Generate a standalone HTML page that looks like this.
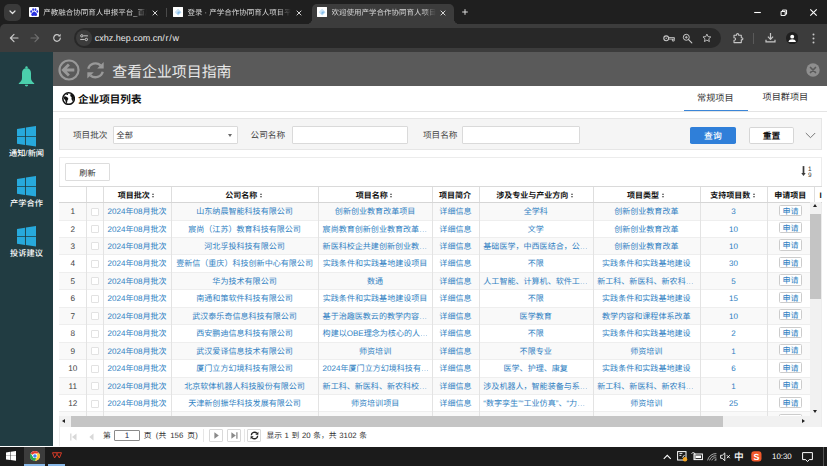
<!DOCTYPE html>
<html lang="zh-CN"><head><meta charset="utf-8"><title>产学合作协同育人项目平台</title>
<style>
*{box-sizing:border-box;margin:0;padding:0}
html,body{width:827px;height:466px;overflow:hidden;background:#fff}
body{position:relative;text-rendering:geometricPrecision;font-family:"Liberation Sans","Noto Sans CJK SC",sans-serif;font-size:8px;color:#333;line-height:1}
.abs{position:absolute}
/* ---------- browser chrome ---------- */
#tabstrip{position:absolute;left:0;top:0;width:827px;height:32px;background:#1f1f1f}
#toolbar{position:absolute;left:0;top:24px;width:827px;height:28px;background:#3c3c3c;border-top-left-radius:5px}
#tabsearch{position:absolute;left:4px;top:4px;width:16.5px;height:16.5px;border-radius:5px;background:#3a3a3a}
.tab{position:absolute;top:4px;height:20px;color:#d6d6d6;font-size:7.5px;white-space:nowrap}
.tab .fav{position:absolute;top:3px;width:10.4px;height:10.4px;background:#fff;border-radius:1px;overflow:hidden}
.tab .tt{position:absolute;top:0;height:18px;line-height:18.4px;overflow:hidden;-webkit-mask-image:linear-gradient(90deg,#000 88%,transparent 100%);mask-image:linear-gradient(90deg,#000 88%,transparent 100%)}
.tab .x{position:absolute;top:4.5px;width:8px;height:8px}
#tab3{left:312px;width:141.5px;background:#3c3c3c;border-radius:5px 5px 0 0}
#tab3:before,#tab3:after{content:"";position:absolute;bottom:0;width:5px;height:5px;background:radial-gradient(circle at 0 0,transparent 4.8px,#3c3c3c 5.2px)}
#tab3:before{left:-5px}
#tab3:after{right:-5px;background:radial-gradient(circle at 100% 0,transparent 4.8px,#3c3c3c 5.2px)}
#omni{position:absolute;left:73.5px;top:3.8px;width:647.5px;height:20.6px;border-radius:10.3px;background:#282828}
#siteinfo{position:absolute;left:2.4px;top:2.4px;width:15.8px;height:15.8px;border-radius:50%;background:#3c3c3c}
#url{position:absolute;left:21.3px;top:0;height:20.6px;line-height:20.2px;font-size:9px;color:#e8e8e8;letter-spacing:0}
/* ---------- app ---------- */
#side{position:absolute;left:0;top:52px;width:53px;height:394px;background:#213c42}
.nav{position:absolute;left:0;width:53px;text-align:center;color:#fff;font-size:8.2px;font-weight:500;white-space:nowrap}
#hdr{position:absolute;left:53px;top:52px;width:774px;height:33.5px;background:#5a5a5a}
#hdr .t{position:absolute;left:59.3px;top:0;height:33.5px;line-height:42px;font-size:14.9px;color:#e8e8e8;white-space:nowrap}
#ptitle{position:absolute;left:78px;top:85.5px;height:25.5px;line-height:29px;font-size:10.6px;font-weight:bold;color:#111;white-space:nowrap}
#pline{position:absolute;left:53px;top:111px;width:774px;height:1px;background:#e4e4e4}
.ptab{position:absolute;top:88px;height:20px;line-height:20px;font-size:9.15px;color:#333;white-space:nowrap}
#tabul{position:absolute;left:684px;top:110.1px;width:64px;height:1.3px;background:#3b86d8}
#filter{position:absolute;left:59px;top:118.3px;width:763px;height:31.6px;background:#f5f5f5;border:1px solid #e6e6e6}
.lbl{position:absolute;top:126.4px;height:17.2px;line-height:19.2px;font-size:8.65px;color:#444;white-space:nowrap}
.inp{position:absolute;top:126.3px;height:17.8px;background:#fff;border:1px solid #dadada;border-radius:1px}
.inp span{position:absolute;left:2.2px;top:0;line-height:17.2px;font-size:8.1px;color:#333}
.inp i{position:absolute;right:4.6px;top:6.5px;border:2.6px solid transparent;border-top:3.9px solid #6a6a6a;border-bottom:0}
.btn{position:absolute;top:127.2px;height:16.6px;line-height:19.2px;text-align:center;font-size:8.8px;border-radius:1.8px}
#bq{left:690.2px;width:45.4px;background:#2f7fd9;color:#fff;font-weight:500}
#br{left:749.3px;width:44.4px;background:#fff;border:1px solid #d6d6d6;color:#111;line-height:17.2px;font-weight:bold}
#gridp{position:absolute;left:59px;top:157.4px;width:763px;height:288.6px;border:1px solid #ececec;border-bottom:0;background:#fff}
#bref{position:absolute;left:65.2px;top:163.4px;width:44.6px;height:17.4px;line-height:19.8px;border:1px solid #ddd;border-radius:1px;background:#fff;text-align:center;font-size:8.2px;color:#333}
.ghead{position:absolute;left:59px;top:186px;width:763px;height:17.1px;border-top:1px solid #dadada;border-bottom:1px solid #d6d6d6;background:#fff;overflow:hidden}
.hc{position:absolute;top:0;height:16.1px;line-height:18px;padding-right:2.2px;text-align:center;font-weight:bold;color:#111;font-size:8px;border-left:1px solid #dedede;white-space:nowrap;overflow:hidden}
.hc:first-child{border-left:0}
.hc.last{text-align:left;padding-left:4px}
.srt{display:inline-block;position:relative;width:3.5px;height:5px;margin-left:2.6px;vertical-align:0.4px}
.srt:before,.srt:after{content:"";position:absolute;left:0;border:1.75px solid transparent}
.srt:before{top:0;border-bottom:2.1px solid #555;border-top:0}
.srt:after{top:2.9px;border-top:2.1px solid #555;border-bottom:0}
.gbody{position:absolute;left:59px;top:203.1px;width:751.4px;height:213.1px;overflow:hidden;background:#fff}
.gr{position:absolute;left:0;width:763px;height:17.45px;border-bottom:1px solid #eee;background:#fff}
.gr.alt{background:#f9f9f9}
.c{position:absolute;top:0;height:17.45px;line-height:18.4px;padding-right:1.5px;text-align:center;color:#2f7fc2;font-size:8.05px;border-left:1px solid #e3e3e3;white-space:nowrap;overflow:hidden}
.c:first-child{border-left:0}
.c.num{padding-right:0;color:#444;font-size:8.2px}
.cb{display:inline-block;width:8px;height:8px;border:1px solid #e2e2e2;background:#fff;vertical-align:-1.5px;border-radius:1px}
.btn-a{display:inline-block;width:23.4px;height:11.2px;line-height:11.2px;border:1px solid #ccc;border-radius:1.5px;background:#fff;color:#2f7fc2;font-size:8.05px;vertical-align:0.5px}
#vsb{position:absolute;left:810.2px;top:202.4px;width:10.8px;height:213.8px;background:#f1f1f1}
#vsb b{position:absolute;left:0;top:11.4px;width:10.8px;height:85.4px;background:#c4c4c4}
#hsb{position:absolute;left:59.5px;top:416.2px;width:761.5px;height:11.2px;background:#f1f1f1}
#hsb b{position:absolute;left:11.8px;top:0;width:651.8px;height:11.2px;background:#c5c5c5}
.tri{position:absolute;width:0;height:0;border:2.6px solid transparent}
#pager{position:absolute;left:59.5px;top:427.4px;width:762px;height:18.6px;background:#fff;font-size:7.8px;color:#333}
#pager span,#pager div{position:absolute;white-space:nowrap}
.pg{top:0;height:18.6px;line-height:17.6px}
.pb{top:1.2px;height:13.8px;border:1px solid #d9d9d9;background:#fff;border-radius:1px}
#taskbar{position:absolute;left:0;top:446.7px;width:827px;height:19.3px;background:#1b1b1b;overflow:hidden}
#taskbar .clk{position:absolute;left:772px;top:0;height:20px;line-height:20.6px;font-size:7.9px;color:#fff}
.c.tr{text-align:left;padding-left:3.3px}
.e{opacity:.6}
</style></head>
<body>
<!-- ===== browser tab strip ===== -->
<div id="tabstrip">
  <div id="tabsearch"><svg class="abs" style="left:5px;top:6px" width="7" height="5" viewBox="0 0 7 5"><path d="M1 1 L3.5 3.5 L6 1" fill="none" stroke="#e3e3e3" stroke-width="1.2" stroke-linecap="round" stroke-linejoin="round"/></svg></div>
  <div class="tab" id="tab1" style="left:24px;width:142px">
    <div class="fav" style="left:4.7px"><svg width="10.4" height="10.4" viewBox="0 0 20 20"><g fill="#2932e1"><ellipse cx="4.2" cy="8.6" rx="1.8" ry="2.4"/><ellipse cx="8" cy="5" rx="1.8" ry="2.5"/><ellipse cx="12.4" cy="5" rx="1.8" ry="2.5"/><ellipse cx="16" cy="8.8" rx="1.8" ry="2.4"/><path d="M10 8.6c2.4 0 3 2.2 4.6 3.6 1.8 1.6 1.4 4.6-1 5-1.400.2-2.400-.4-3.600-.4s-2.200.6-3.600.4c-2.400-.4-2.800-3.400-1-5C7 10.800 7.600 8.600 10 8.600z"/></g></svg></div>
    <div class="tt" style="left:19.3px;width:104px">产教融合协同育人申报平台_百度搜索</div>
    <svg class="x" style="left:126.8px" viewBox="0 0 8 8"><path d="M1.700 1.700L6.300 6.300M6.300 1.700L1.700 6.300" stroke="#dcdcdc" stroke-width=".950"/></svg>
  </div>
  <div class="abs" style="left:166.300px;top:8px;width:1px;height:9px;background:#4a4a4a"></div>
  <div class="tab" id="tab2" style="left:168px;width:142px">
    <div class="fav" style="left:5px"><svg width="10.400" height="10.400" viewBox="0 0 20 20"><rect width="20" height="20" fill="#fff"/><path d="M10 3.500l6.500 6.500-6.500 6.500L3.500 10z" fill="#b9daf3"/><path d="M10 6.500l3.500 3.500-3.500 3.500L6.500 10z" fill="#7db9ea"/><path d="M10 3.500l3 3-6.500 6.500-3-3z" fill="#d5e9f8" opacity=".8"/></svg></div>
    <div class="tt" style="left:19.500px;width:103px">登录 · 产学合作协同育人项目平台</div>
    <svg class="x" style="left:127.200px" viewBox="0 0 8 8"><path d="M1.700 1.700L6.300 6.300M6.300 1.700L1.700 6.300" stroke="#dcdcdc" stroke-width=".950"/></svg>
  </div>
  <div class="tab" id="tab3">
    <div class="fav" style="left:5px"><svg width="10.400" height="10.400" viewBox="0 0 20 20"><rect width="20" height="20" fill="#fff"/><path d="M10 3.500l6.500 6.500-6.500 6.500L3.500 10z" fill="#b9daf3"/><path d="M10 6.500l3.500 3.500-3.500 3.500L6.500 10z" fill="#7db9ea"/><path d="M10 3.500l3 3-6.500 6.500-3-3z" fill="#d5e9f8" opacity=".8"/></svg></div>
    <div class="tt" style="left:19.600px;width:104px">欢迎使用产学合作协同育人项目平台</div>
    <svg class="x" style="left:127px" viewBox="0 0 8 8"><path d="M1.700 1.700L6.300 6.300M6.300 1.700L1.700 6.300" stroke="#dcdcdc" stroke-width=".950"/></svg>
  </div>
  <svg class="abs" style="left:460.800px;top:8.400px" width="8" height="8" viewBox="0 0 8 8"><path d="M4 1.200v5.600M1.200 4h5.600" stroke="#dcdcdc" stroke-width="1"/></svg>
  <!-- window controls -->
  <svg class="abs" style="left:753px;top:8px" width="9" height="9" viewBox="0 0 9 9"><path d="M1.200 4.500h6.600" stroke="#fff" stroke-width="1.100"/></svg>
  <svg class="abs" style="left:780.400px;top:8.600px" width="7.400" height="7.400" viewBox="0 0 9 9"><path d="M1.300 3h5v5h-5z" fill="none" stroke="#fff" stroke-width="1.200"/><path d="M3 3V1.300h5v5H6.300" fill="none" stroke="#fff" stroke-width="1.200"/></svg>
  <svg class="abs" style="left:808.600px;top:7.900px" width="9" height="9" viewBox="0 0 9 9"><path d="M1.300 1.300l6.400 6.400M7.700 1.300L1.300 7.700" stroke="#fff" stroke-width="1.100"/></svg>
</div>
<!-- ===== browser toolbar ===== -->
<div id="toolbar">
  <svg class="abs" style="left:8.500px;top:9.200px" width="10" height="10" viewBox="0 0 10 10"><path d="M9 5H1.600M5 1.400L1.400 5 5 8.600" fill="none" stroke="#c7c7c7" stroke-width="1.200" stroke-linecap="round" stroke-linejoin="round"/></svg>
  <svg class="abs" style="left:29.800px;top:9.200px" width="10" height="10" viewBox="0 0 10 10"><path d="M1 5h7.400M5 1.400L8.600 5 5 8.600" fill="none" stroke="#6e6e6e" stroke-width="1.200" stroke-linecap="round" stroke-linejoin="round"/></svg>
  <svg class="abs" style="left:51.900px;top:9.200px" width="10" height="10" viewBox="0 0 10 10"><path d="M8.300 5A3.300 3.300 0 1 1 7.300 2.600" fill="none" stroke="#c7c7c7" stroke-width="1.200" stroke-linecap="round"/><path d="M8.600 0.800v2.600H6z" fill="#c7c7c7"/></svg>
  <div id="omni">
    <div id="siteinfo"><svg class="abs" style="left:3.800px;top:4.300px" width="8.200" height="7.300" viewBox="0 0 9 8"><circle cx="2" cy="2" r="1.300" fill="none" stroke="#e3e3e3" stroke-width=".9"/><path d="M4.300 2h4" stroke="#e3e3e3" stroke-width=".9" stroke-linecap="round"/><circle cx="7" cy="6" r="1.300" fill="none" stroke="#e3e3e3" stroke-width=".9"/><path d="M.700 6h4" stroke="#e3e3e3" stroke-width=".9" stroke-linecap="round"/></svg></div>
    <div id="url">cxhz.hep.com.cn<span style="letter-spacing:.700px">/r/w</span></div>
    <!-- key -->
    <svg class="abs" style="left:589px;top:6px" width="13" height="9" viewBox="0 0 13 9"><circle cx="3.200" cy="4.300" r="2.400" fill="none" stroke="#c7c7c7" stroke-width="1.100"/><circle cx="3.200" cy="4.300" r=".700" fill="#c7c7c7"/><path d="M5.600 3.600h5.800v1.500H5.600" fill="none" stroke="#c7c7c7" stroke-width=".9"/><path d="M9.400 5v2h1.800V5" fill="none" stroke="#c7c7c7" stroke-width=".9"/></svg>
    <!-- zoom -->
    <svg class="abs" style="left:608.500px;top:5px" width="11" height="11" viewBox="0 0 11 11"><circle cx="4.300" cy="4.300" r="3" fill="none" stroke="#c7c7c7" stroke-width="1"/><path d="M6.600 6.600l3.200 3.200" stroke="#c7c7c7" stroke-width="1.200" stroke-linecap="round"/><path d="M2.900 4.300h2.800M4.300 2.900v2.800" stroke="#c7c7c7" stroke-width=".9"/></svg>
    <!-- star -->
    <svg class="abs" style="left:628.700px;top:5.400px" width="9.800" height="9.800" viewBox="0 0 11 11"><path d="M5.500 1.200l1.300 2.900 3.100.3-2.300 2.100.7 3.100-2.800-1.600-2.800 1.600.7-3.100L1.100 4.400l3.100-.3z" fill="none" stroke="#c7c7c7" stroke-width="1" stroke-linejoin="round"/></svg>
  </div>
  <!-- extension -->
  <svg class="abs" style="left:731.500px;top:8px" width="12" height="12" viewBox="0 0 12 12"><path d="M2 3.300h2.500v-.600a1.100 1.100 0 0 1 2.200 0v.600H9.300v2.400h.500a1.100 1.100 0 0 1 0 2.200h-.500V10.600H2V8.200h.400a1.200 1.200 0 0 0 0-2.400H2z" fill="none" stroke="#c7c7c7" stroke-width="1.100" stroke-linejoin="round"/></svg>
  <div class="abs" style="left:753.400px;top:8.500px;width:1px;height:11px;background:#5a5a5a"></div>
  <!-- download -->
  <svg class="abs" style="left:764.500px;top:8.400px" width="11" height="11" viewBox="0 0 11 11"><path d="M5.500 1v6M2.900 4.700l2.600 2.600 2.600-2.600" fill="none" stroke="#c7c7c7" stroke-width="1.200" stroke-linejoin="round"/><path d="M1 7.800v2.100h9V7.800" fill="none" stroke="#c7c7c7" stroke-width="1.200"/></svg>
  <!-- profile -->
  <svg class="abs" style="left:785.600px;top:7.800px" width="12.400" height="12.400" viewBox="0 0 12 12"><circle cx="6" cy="6" r="6" fill="#1f1f1f"/><circle cx="6" cy="4.500" r="1.900" fill="#fff"/><path d="M2.400 9.600c.5-1.900 2-2.500 3.600-2.500s3.100.6 3.600 2.500z" fill="#fff"/></svg>
  <svg class="abs" style="left:812px;top:8.500px" width="3" height="11" viewBox="0 0 3 11"><circle cx="1.500" cy="1.500" r="1" fill="#c7c7c7"/><circle cx="1.500" cy="5.500" r="1" fill="#c7c7c7"/><circle cx="1.500" cy="9.500" r="1" fill="#c7c7c7"/></svg>
</div>
<!-- ===== sidebar ===== -->
<div id="side">
  <svg class="abs" style="left:18px;top:14px" width="17" height="21" viewBox="0 0 17 21"><circle cx="8.500" cy="1.400" r="1.200" fill="#4bcfac"/><path d="M8.500 2.300C11.200 2.300 13 4 13 7V12C13 14.500 14.500 16 16.200 17.200V18H.800V17.200C2.500 16 4 14.500 4 12V7C4 4 5.800 2.300 8.500 2.300Z" fill="#4bcfac"/><path d="M6.900 18.700h3.200c0 1.100-.7 1.700-1.600 1.700s-1.600-.6-1.600-1.700z" fill="#4bcfac"/></svg>
  <svg class="abs winlogo" style="left:16.600px;top:74.0px" width="19.500" height="20.700" viewBox="0 0 22 23" preserveAspectRatio="none"><path d="M0 3.200l9-1.300v9.100H0zM10 1.800L22 0v11H10zM0 12h9v9.100l-9-1.300zM10 12h12v11l-12-1.800z" fill="#27a9dc"/></svg>
  <div class="nav" style="top:98.300px">通知/新闻</div>
  <svg class="abs winlogo" style="left:16.600px;top:123.9px" width="19.500" height="20.700" viewBox="0 0 22 23" preserveAspectRatio="none"><path d="M0 3.200l9-1.300v9.100H0zM10 1.800L22 0v11H10zM0 12h9v9.100l-9-1.300zM10 12h12v11l-12-1.800z" fill="#27a9dc"/></svg>
  <div class="nav" style="top:148.200px">产学合作</div>
  <svg class="abs winlogo" style="left:16.600px;top:173.9px" width="19.500" height="20.700" viewBox="0 0 22 23" preserveAspectRatio="none"><path d="M0 3.200l9-1.300v9.100H0zM10 1.800L22 0v11H10zM0 12h9v9.100l-9-1.300zM10 12h12v11l-12-1.800z" fill="#27a9dc"/></svg>
  <div class="nav" style="top:198.200px">投诉建议</div>
</div>
<!-- ===== app header ===== -->
<div id="hdr">
  <svg class="abs" style="left:5.100px;top:6.800px" width="22" height="22" viewBox="0 0 22 22"><circle cx="11" cy="11" r="9.500" fill="none" stroke="#999" stroke-width="2.200"/><path d="M16.300 11H5.800M10.900 5.400L5.300 11l5.600 5.600" fill="none" stroke="#999" stroke-width="2.800" stroke-linecap="butt" stroke-linejoin="miter"/></svg>
  <svg class="abs" style="left:33.400px;top:8.600px" width="19" height="18.600" viewBox="0 0 20 20" preserveAspectRatio="none"><path d="M2.400 8.400A7.800 7.400 0 0 1 15.400 4.600" fill="none" stroke="#999" stroke-width="2.500"/><path d="M18.600 1.200v6.800h-6.800z" fill="#999"/><path d="M17.600 11.600A7.800 7.400 0 0 1 4.600 15.400" fill="none" stroke="#999" stroke-width="2.500"/><path d="M1.400 18.800v-6.800h6.800z" fill="#999"/></svg>
  <div class="t">查看企业项目指南</div>
  <svg class="abs" style="left:753.400px;top:10.500px" width="14" height="14" viewBox="0 0 14 14"><circle cx="7" cy="7" r="6.700" fill="#8e8e8e"/><path d="M4.500 4.500l5 5M9.500 4.500l-5 5" stroke="#5a5a5a" stroke-width="1.700" stroke-linecap="round"/></svg>
</div>
<!-- ===== panel title & tabs ===== -->
<svg class="abs" style="left:61.800px;top:91.800px" width="13.200" height="13.200" viewBox="0 0 13 13"><circle cx="6.500" cy="6.500" r="5.700" fill="#fff" stroke="#111" stroke-width="1.500"/><path d="M2.300 4.400c.8-.3 1.700-.1 2.400.5.700.5 1.500.8 1.500 1.700 0 .8-.7 1.200-.9 2-.2.900-.1 2-.9 2.500-.7-.5-.8-1.500-1-2.400-.3-1-1.300-1.500-1.600-2.500-.2-.7 0-1.400.5-1.800z" fill="#111"/><path d="M8.300 1.800c.3.700-.2 1.300-.1 2 .1.600.8.700 1.100 1.200.4.700-.1 1.500.1 2.200.2.700.9 1.100 1 1.900 1.300-1.200 1.700-3 1.200-4.600-.5-1.400-1.700-2.400-3.300-2.700z" fill="#111"/><path d="M5.200 1.300c.6.200 1 .7.700 1.300-.3.500-1 .3-1.500 0-.3-.3-.2-.8.100-1.100.2-.1.500-.2.700-.2z" fill="#111"/></svg>
<div id="ptitle">企业项目列表</div>
<div class="ptab" style="left:697px">常规项目</div>
<div class="ptab" style="left:762.600px;top:87.200px">项目群项目</div>
<div id="pline"></div>
<div id="tabul"></div>
<!-- ===== filter ===== -->
<div id="filter"></div>
<div class="lbl" style="left:72.900px">项目批次</div>
<div class="inp" style="left:113.400px;width:124.400px"><span>全部</span><i></i></div>
<div class="lbl" style="left:250.500px">公司名称</div>
<div class="inp" style="left:291.700px;width:116.500px"></div>
<div class="lbl" style="left:422.900px">项目名称</div>
<div class="inp" style="left:462.200px;width:117.800px"></div>
<div class="btn" id="bq">查询</div>
<div class="btn" id="br">重置</div>
<svg class="abs" style="left:804.500px;top:131.800px" width="11" height="7" viewBox="0 0 11 7"><path d="M.800 1l4.700 4.700L10.200 1" fill="none" stroke="#777" stroke-width="1"/></svg>
<!-- ===== grid panel ===== -->
<div id="gridp"></div>
<div id="bref">刷新</div>
<svg class="abs" style="left:799.500px;top:166px" width="14" height="12" viewBox="0 0 14 12"><path d="M3.500 .100v8" stroke="#3a3a3a" stroke-width="1.700"/><path d="M1.300 7h4.400L3.500 10.100z" fill="#3a3a3a"/><text x="9.700" y="4.600" text-anchor="middle" style="font-family:'Liberation Sans',sans-serif;font-size:6.400px" fill="#333">1</text><text x="9.700" y="10.800" text-anchor="middle" style="font-family:'Liberation Sans',sans-serif;font-size:6.400px" fill="#333">9</text></svg>
<div class="ghead">
<div class="hc" style="left:0.0px;width:27.4px"></div>
<div class="hc" style="left:27.4px;width:16.9px"></div>
<div class="hc" style="left:44.3px;width:68.0px">项目批次<i class="srt"></i></div>
<div class="hc" style="left:112.3px;width:147.0px">公司名称<i class="srt"></i></div>
<div class="hc" style="left:259.3px;width:114.1px">项目名称<i class="srt"></i></div>
<div class="hc" style="left:373.4px;width:46.6px">项目简介</div>
<div class="hc" style="left:420.0px;width:113.9px">涉及专业与产业方向<i class="srt"></i></div>
<div class="hc" style="left:533.9px;width:107.4px">项目类型<i class="srt"></i></div>
<div class="hc" style="left:641.3px;width:67.0px">支持项目数<i class="srt"></i></div>
<div class="hc" style="left:708.3px;width:47.1px">申请项目</div>
<div class="hc last" style="left:755.4px;width:7.6px">I</div>
</div>
<div class="gbody">
<div class="gr alt" style="top:0.00px">
<div class="c num" style="left:0.0px;width:27.4px">1</div><div class="c" style="left:27.4px;width:16.9px"><span class="cb"></span></div><div class="c" style="left:44.3px;width:68.0px">2024年08月批次</div><div class="c" style="left:112.3px;width:147.0px">山东纳晨智能科技有限公司</div><div class="c" style="left:259.3px;width:114.1px">创新创业教育改革项目</div><div class="c" style="left:373.4px;width:46.6px">详细信息</div><div class="c" style="left:420.0px;width:113.9px">全学科</div><div class="c" style="left:533.9px;width:107.4px">创新创业教育改革</div><div class="c" style="left:641.3px;width:67.0px">3</div><div class="c" style="left:708.3px;width:47.1px"><span class="btn-a">申请</span></div>
</div>
<div class="gr" style="top:17.45px">
<div class="c num" style="left:0.0px;width:27.4px">2</div><div class="c" style="left:27.4px;width:16.9px"><span class="cb"></span></div><div class="c" style="left:44.3px;width:68.0px">2024年08月批次</div><div class="c" style="left:112.3px;width:147.0px">宸尚（江苏）教育科技有限公司</div><div class="c tr" style="left:259.3px;width:114.1px">宸尚教育创新创业教育改革<span class="e">…</span></div><div class="c" style="left:373.4px;width:46.6px">详细信息</div><div class="c" style="left:420.0px;width:113.9px">文学</div><div class="c" style="left:533.9px;width:107.4px">创新创业教育改革</div><div class="c" style="left:641.3px;width:67.0px">10</div><div class="c" style="left:708.3px;width:47.1px"><span class="btn-a">申请</span></div>
</div>
<div class="gr alt" style="top:34.90px">
<div class="c num" style="left:0.0px;width:27.4px">3</div><div class="c" style="left:27.4px;width:16.9px"><span class="cb"></span></div><div class="c" style="left:44.3px;width:68.0px">2024年08月批次</div><div class="c" style="left:112.3px;width:147.0px">河北孚投科技有限公司</div><div class="c tr" style="left:259.3px;width:114.1px">新医科校企共建创新创业教<span class="e">…</span></div><div class="c" style="left:373.4px;width:46.6px">详细信息</div><div class="c tr" style="left:420.0px;width:113.9px">基础医学，中西医结合，公<span class="e">…</span></div><div class="c" style="left:533.9px;width:107.4px">创新创业教育改革</div><div class="c" style="left:641.3px;width:67.0px">10</div><div class="c" style="left:708.3px;width:47.1px"><span class="btn-a">申请</span></div>
</div>
<div class="gr" style="top:52.35px">
<div class="c num" style="left:0.0px;width:27.4px">4</div><div class="c" style="left:27.4px;width:16.9px"><span class="cb"></span></div><div class="c" style="left:44.3px;width:68.0px">2024年08月批次</div><div class="c" style="left:112.3px;width:147.0px">壹新信（重庆）科技创新中心有限公司</div><div class="c" style="left:259.3px;width:114.1px">实践条件和实践基地建设项目</div><div class="c" style="left:373.4px;width:46.6px">详细信息</div><div class="c" style="left:420.0px;width:113.9px">不限</div><div class="c" style="left:533.9px;width:107.4px">实践条件和实践基地建设</div><div class="c" style="left:641.3px;width:67.0px">30</div><div class="c" style="left:708.3px;width:47.1px"><span class="btn-a">申请</span></div>
</div>
<div class="gr alt" style="top:69.80px">
<div class="c num" style="left:0.0px;width:27.4px">5</div><div class="c" style="left:27.4px;width:16.9px"><span class="cb"></span></div><div class="c" style="left:44.3px;width:68.0px">2024年08月批次</div><div class="c" style="left:112.3px;width:147.0px">华为技术有限公司</div><div class="c" style="left:259.3px;width:114.1px">数通</div><div class="c" style="left:373.4px;width:46.6px">详细信息</div><div class="c tr" style="left:420.0px;width:113.9px">人工智能、计算机、软件工<span class="e">…</span></div><div class="c tr" style="left:533.9px;width:107.4px">新工科、新医科、新农科<span class="e">…</span></div><div class="c" style="left:641.3px;width:67.0px">5</div><div class="c" style="left:708.3px;width:47.1px"><span class="btn-a">申请</span></div>
</div>
<div class="gr" style="top:87.25px">
<div class="c num" style="left:0.0px;width:27.4px">6</div><div class="c" style="left:27.4px;width:16.9px"><span class="cb"></span></div><div class="c" style="left:44.3px;width:68.0px">2024年08月批次</div><div class="c" style="left:112.3px;width:147.0px">南通和策软件科技有限公司</div><div class="c" style="left:259.3px;width:114.1px">实践条件和实践基地建设项目</div><div class="c" style="left:373.4px;width:46.6px">详细信息</div><div class="c" style="left:420.0px;width:113.9px">不限</div><div class="c" style="left:533.9px;width:107.4px">实践条件和实践基地建设</div><div class="c" style="left:641.3px;width:67.0px">15</div><div class="c" style="left:708.3px;width:47.1px"><span class="btn-a">申请</span></div>
</div>
<div class="gr alt" style="top:104.70px">
<div class="c num" style="left:0.0px;width:27.4px">7</div><div class="c" style="left:27.4px;width:16.9px"><span class="cb"></span></div><div class="c" style="left:44.3px;width:68.0px">2024年08月批次</div><div class="c" style="left:112.3px;width:147.0px">武汉泰乐奇信息科技有限公司</div><div class="c tr" style="left:259.3px;width:114.1px">基于治趣医教云的教学内容<span class="e">…</span></div><div class="c" style="left:373.4px;width:46.6px">详细信息</div><div class="c" style="left:420.0px;width:113.9px">医学教育</div><div class="c" style="left:533.9px;width:107.4px">教学内容和课程体系改革</div><div class="c" style="left:641.3px;width:67.0px">10</div><div class="c" style="left:708.3px;width:47.1px"><span class="btn-a">申请</span></div>
</div>
<div class="gr" style="top:122.15px">
<div class="c num" style="left:0.0px;width:27.4px">8</div><div class="c" style="left:27.4px;width:16.9px"><span class="cb"></span></div><div class="c" style="left:44.3px;width:68.0px">2024年08月批次</div><div class="c" style="left:112.3px;width:147.0px">西安鹏迪信息科技有限公司</div><div class="c tr" style="left:259.3px;width:114.1px">构建以OBE理念为核心的人<span class="e">…</span></div><div class="c" style="left:373.4px;width:46.6px">详细信息</div><div class="c" style="left:420.0px;width:113.9px">不限</div><div class="c" style="left:533.9px;width:107.4px">实践条件和实践基地建设</div><div class="c" style="left:641.3px;width:67.0px">2</div><div class="c" style="left:708.3px;width:47.1px"><span class="btn-a">申请</span></div>
</div>
<div class="gr alt" style="top:139.60px">
<div class="c num" style="left:0.0px;width:27.4px">9</div><div class="c" style="left:27.4px;width:16.9px"><span class="cb"></span></div><div class="c" style="left:44.3px;width:68.0px">2024年08月批次</div><div class="c" style="left:112.3px;width:147.0px">武汉爱译信息技术有限公司</div><div class="c" style="left:259.3px;width:114.1px">师资培训</div><div class="c" style="left:373.4px;width:46.6px">详细信息</div><div class="c" style="left:420.0px;width:113.9px">不限专业</div><div class="c" style="left:533.9px;width:107.4px">师资培训</div><div class="c" style="left:641.3px;width:67.0px">1</div><div class="c" style="left:708.3px;width:47.1px"><span class="btn-a">申请</span></div>
</div>
<div class="gr" style="top:157.05px">
<div class="c num" style="left:0.0px;width:27.4px">10</div><div class="c" style="left:27.4px;width:16.9px"><span class="cb"></span></div><div class="c" style="left:44.3px;width:68.0px">2024年08月批次</div><div class="c" style="left:112.3px;width:147.0px">厦门立方幻境科技有限公司</div><div class="c tr" style="left:259.3px;width:114.1px">2024年厦门立方幻境科技有<span class="e">…</span></div><div class="c" style="left:373.4px;width:46.6px">详细信息</div><div class="c" style="left:420.0px;width:113.9px">医学、护理、康复</div><div class="c" style="left:533.9px;width:107.4px">实践条件和实践基地建设</div><div class="c" style="left:641.3px;width:67.0px">6</div><div class="c" style="left:708.3px;width:47.1px"><span class="btn-a">申请</span></div>
</div>
<div class="gr alt" style="top:174.50px">
<div class="c num" style="left:0.0px;width:27.4px">11</div><div class="c" style="left:27.4px;width:16.9px"><span class="cb"></span></div><div class="c" style="left:44.3px;width:68.0px">2024年08月批次</div><div class="c" style="left:112.3px;width:147.0px">北京软体机器人科技股份有限公司</div><div class="c tr" style="left:259.3px;width:114.1px">新工科、新医科、新农科校<span class="e">…</span></div><div class="c" style="left:373.4px;width:46.6px">详细信息</div><div class="c tr" style="left:420.0px;width:113.9px">涉及机器人，智能装备与系<span class="e">…</span></div><div class="c tr" style="left:533.9px;width:107.4px">新工科、新医科、新农科<span class="e">…</span></div><div class="c" style="left:641.3px;width:67.0px">1</div><div class="c" style="left:708.3px;width:47.1px"><span class="btn-a">申请</span></div>
</div>
<div class="gr" style="top:191.95px">
<div class="c num" style="left:0.0px;width:27.4px">12</div><div class="c" style="left:27.4px;width:16.9px"><span class="cb"></span></div><div class="c" style="left:44.3px;width:68.0px">2024年08月批次</div><div class="c" style="left:112.3px;width:147.0px">天津新创振华科技发展有限公司</div><div class="c" style="left:259.3px;width:114.1px">师资培训项目</div><div class="c" style="left:373.4px;width:46.6px">详细信息</div><div class="c tr" style="left:420.0px;width:113.9px">“数字孪生”“工业仿真”、“力<span class="e">…</span></div><div class="c" style="left:533.9px;width:107.4px">师资培训</div><div class="c" style="left:641.3px;width:67.0px">25</div><div class="c" style="left:708.3px;width:47.1px"><span class="btn-a">申请</span></div>
</div>
<div class="gr alt" style="top:209.40px">
<div class="c num" style="left:0.0px;width:27.4px">13</div><div class="c" style="left:27.4px;width:16.9px"><span class="cb"></span></div><div class="c" style="left:44.3px;width:68.0px">2024年08月批次</div><div class="c" style="left:112.3px;width:147.0px">天津新创振华科技发展有限公司</div><div class="c" style="left:259.3px;width:114.1px">师资培训项目</div><div class="c" style="left:373.4px;width:46.6px">详细信息</div><div class="c" style="left:420.0px;width:113.9px">不限</div><div class="c" style="left:533.9px;width:107.4px">师资培训</div><div class="c" style="left:641.3px;width:67.0px">25</div><div class="c" style="left:708.3px;width:47.1px"><span class="btn-a">申请</span></div>
</div>
</div>
<!-- ===== scrollbars ===== -->
<div id="vsb"><b></b><span class="tri" style="left:2.800px;top:1.800px;border-bottom:3.200px solid #222;border-top:0"></span><span class="tri" style="left:2.800px;bottom:3px;border-top:3.200px solid #222;border-bottom:0"></span></div>
<div id="hsb"><b></b><span class="tri" style="left:2.600px;top:3px;border-right:3.200px solid #222;border-left:0"></span><span class="tri" style="right:16.500px;top:3px;border-left:3.200px solid #222;border-right:0"></span></div>
<!-- ===== pager ===== -->
<div id="pager">
  <svg class="abs" style="left:10.300px;top:5.300px" width="7" height="8" viewBox="0 0 7 8"><path d="M.800 .600v6.800" stroke="#d8d8d8" stroke-width="1.300"/><path d="M6.500 .600v6.800L2 4z" fill="#d8d8d8"/></svg>
  <svg class="abs" style="left:29.700px;top:5.300px" width="5" height="8" viewBox="0 0 5 8"><path d="M4.500 .600v6.800L.300 4z" fill="#d8d8d8"/></svg>
  <span class="pg" style="left:43.500px">第</span>
  <div class="pb" style="left:54.900px;top:2.400px;width:25.200px;height:11.300px;border-color:#8a8a8a;text-align:center;line-height:9.600px;color:#1a1a4a;font-size:8px">1</div>
  <span class="pg" style="left:84.300px">页</span>
  <span class="pg" style="left:96.300px;word-spacing:1.900px">(共 156 页)</span>
  <div style="left:143.500px;top:2px;width:1px;height:13px;background:#e6e6e6"></div>
  <div class="pb" style="left:149.200px;width:14.200px"><svg class="abs" style="left:4.200px;top:2.700px" width="5" height="7" viewBox="0 0 5 7"><path d="M.400 .200v6.600L4.800 3.500z" fill="#8a8a8a"/></svg></div>
  <div class="pb" style="left:167.200px;width:14.600px"><svg class="abs" style="left:3.300px;top:2.700px" width="7" height="7" viewBox="0 0 7 7"><path d="M.400 .200v6.600L4.800 3.500z" fill="#8a8a8a"/><path d="M5.900 .200v6.600" stroke="#8a8a8a" stroke-width="1.300"/></svg></div>
  <div style="left:184.500px;top:2px;width:1px;height:13px;background:#e6e6e6"></div>
  <div class="pb" style="left:187.300px;width:14.200px"><svg class="abs" style="left:1.900px;top:1.700px" width="9" height="9" viewBox="0 0 9 9"><path d="M1.300 4.200A3.200 3.200 0 0 1 6.900 2.300" fill="none" stroke="#222" stroke-width="1.400"/><path d="M8.400 .700v3.100H5.300z" fill="#222"/><path d="M7.700 4.800A3.200 3.200 0 0 1 2.100 6.700" fill="none" stroke="#222" stroke-width="1.400"/><path d="M.600 8.300V5.200h3.100z" fill="#222"/></svg></div>
  <span class="pg" style="left:206.900px;word-spacing:.450px">显示 1 到 20 条，共 3102 条</span>
</div>
<!-- ===== taskbar ===== -->
<div id="taskbar">
  <svg class="abs" style="left:5.600px;top:4.500px" width="10.400" height="9.800" viewBox="0 0 22 22" preserveAspectRatio="none"><path d="M0 3.100l9-1.200v8.600H0zM10 1.700L22 0v10.500H10zM0 11.500h9v8.600l-9-1.200zM10 11.500h12V22l-12-1.700z" fill="#fff"/></svg>
  <div class="abs" style="left:24px;top:0;width:21.200px;height:20px;background:#3c3c3c"></div>
  <div class="abs" style="left:24px;top:17.500px;width:21.200px;height:2px;background:#86b6e6"></div>
  <svg class="abs" style="left:29.800px;top:4.500px" width="9.800" height="9.800" viewBox="0 0 24 24"><circle cx="12" cy="12" r="12" fill="#fff"/><path d="M12 0A12 12 0 0 1 22.400 6H12a6 6 0 0 0-5.200 3L1.600 6A12 12 0 0 1 12 0z" fill="#e33b2e"/><path d="M22.400 6A12 12 0 0 1 12.600 24l5.200-9a6 6 0 0 0 0-6L22.400 6z" fill="#fcc934"/><path d="M1.600 6l5.200 9a6 6 0 0 0 5.200 3l-.0 6A12 12 0 0 1 1.600 6z" fill="#2da94f"/><path d="M12.600 24A12 12 0 0 1 1.600 6l5.200 9a6 6 0 0 0 5.200 3 6 6 0 0 0 5.200-3z" fill="#2da94f"/><path d="M22.400 6A12 12 0 0 1 12.600 24l5.200-9a6 6 0 0 0-5.800-9z" fill="#fcc934"/><circle cx="12" cy="12" r="5.400" fill="#fff"/><circle cx="12" cy="12" r="4.300" fill="#4285f4"/></svg>
  <svg class="abs" style="left:52px;top:5.800px" width="10" height="6.800" viewBox="0 0 20 13"><path d="M1 1.200h18L14.800 11.600 10 4.200 5.200 11.600z" fill="none" stroke="#e23d28" stroke-width="1.900" stroke-linejoin="miter"/><path d="M7.400 1.200L10 4.200l2.600-3" fill="none" stroke="#e23d28" stroke-width="1.300"/></svg>
  <div class="abs" style="left:47.600px;top:17.700px;width:17px;height:1.800px;background:#86b6e6"></div>
  <!-- tray -->
  <svg class="abs" style="left:663px;top:7px" width="8.500" height="6" viewBox="0 0 9 6"><path d="M.800 5L4.500 1.200 8.200 5" fill="none" stroke="#fff" stroke-width="1.100"/></svg>
  <svg class="abs" style="left:677px;top:4.800px" width="11" height="11" viewBox="0 0 11 11"><rect x=".600" y=".600" width="8.400" height="8.400" fill="none" stroke="#fff" stroke-width="1"/><path d="M2.400 2.400h3M2.400 4.400h2M5.500 6.500l2-2.500" stroke="#fff" stroke-width=".9"/><circle cx="8" cy="8.300" r="2.200" fill="#f5a623"/></svg>
  <svg class="abs" style="left:690.500px;top:5.500px" width="12" height="9" viewBox="0 0 12 9"><rect x="3" y="2" width="8.400" height="5.600" fill="none" stroke="#fff" stroke-width="1"/><rect x="4.600" y="3.500" width="5.400" height="2.600" fill="#fff"/><path d="M.500 1.500c1.500-1.300 3-1.300 3.500.5v5" fill="none" stroke="#fff" stroke-width=".9"/></svg>
  <svg class="abs" style="left:706.500px;top:5.500px" width="10" height="9" viewBox="0 0 10 9"><path d="M.600 8.400A8.400 8.400 0 0 1 9.400 1.600" fill="none" stroke="#bbb" stroke-width=".9"/><path d="M2.600 8.400A6 6 0 0 1 9.400 3.800" fill="none" stroke="#bbb" stroke-width=".9"/><path d="M4.800 8.400A3.800 3.800 0 0 1 9.400 6" fill="none" stroke="#bbb" stroke-width=".9"/><path d="M7 8.600l2.400-2v2z" fill="#bbb"/></svg>
  <svg class="abs" style="left:719.600px;top:5.200px" width="11" height="9.600" viewBox="0 0 11 9.600"><path d="M.600 3.300h1.700L4.800.900v7.800L2.300 6.300H.600z" fill="none" stroke="#fff" stroke-width=".9" stroke-linejoin="round"/><path d="M6.800 3.200l3 3M9.800 3.200l-3 3" stroke="#fff" stroke-width=".9"/></svg>
  <div class="abs" style="left:734.100px;top:0;height:20px;line-height:21.200px;font-size:9.700px;font-weight:500;color:#fff">中</div>
  <svg class="abs" style="left:751.200px;top:4.600px" width="10.800" height="10.800" viewBox="0 0 11 11"><rect x=".300" y=".300" width="10.400" height="10.400" rx="3" fill="#f2592b"/><text x="2.500" y="8.900" font-family="Liberation Sans, sans-serif" font-weight="bold" font-size="9" fill="#fff">S</text></svg>
  <div class="clk">10:30</div>
  <svg class="abs" style="left:801.500px;top:5px" width="11" height="10.500" viewBox="0 0 11 10.500"><path d="M.600 .600h9.800v7H7.300L5.500 9.600 3.700 7.600H.600z" fill="none" stroke="#fff" stroke-width="1" stroke-linejoin="round"/></svg>
  <div class="abs" style="left:823px;top:0;width:1px;height:20px;background:#555"></div>
</div>
</body></html>
